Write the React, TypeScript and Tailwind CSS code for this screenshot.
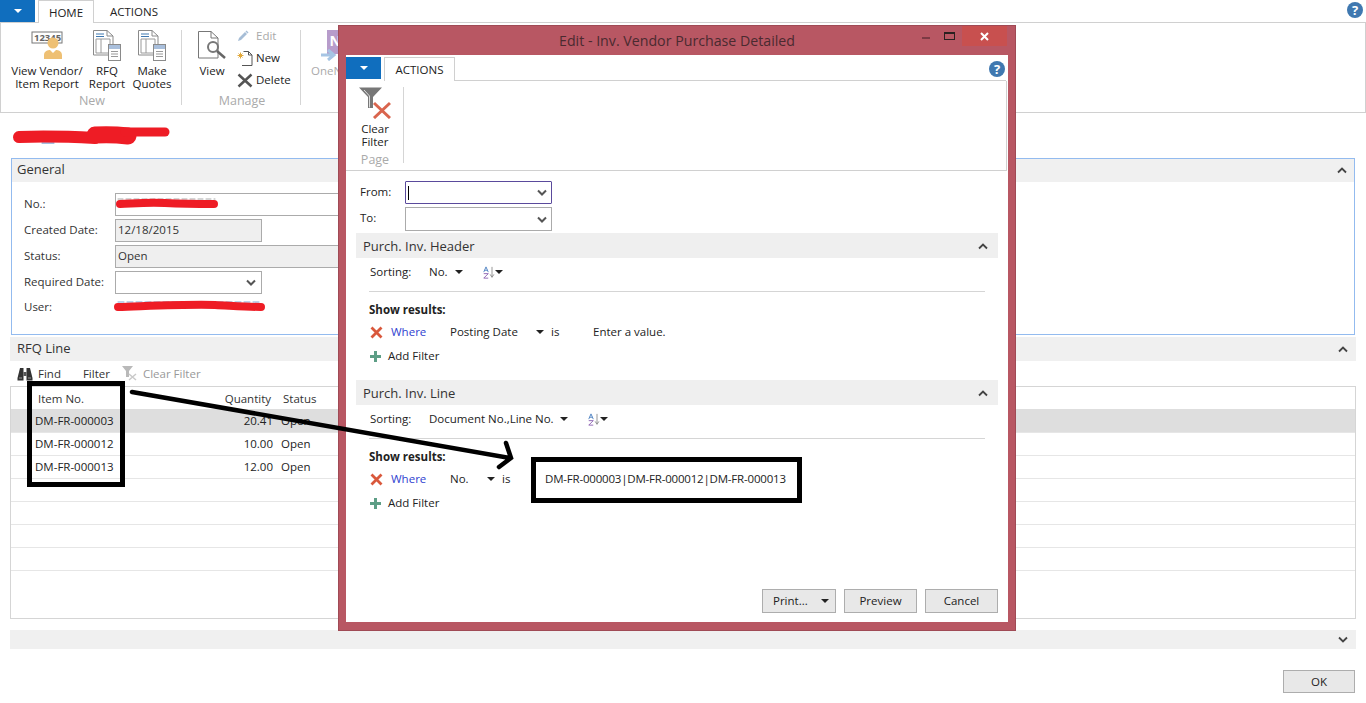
const Chevron = ({ down = false }: { down?: boolean }) => (
    <svg width="10" height="7" viewBox="0 0 10 7" className="shrink-0">
        <path
            d={down ? "M1 1.5 5 5.5 9 1.5" : "M1 5.5 5 1.5 9 5.5"}
            fill="none"
            stroke="#444"
            strokeWidth="1.8"
        />
    </svg>
);

const SelectArrow = () => (
    <svg width="10" height="7" viewBox="0 0 10 7" className="shrink-0">
        <path d="M1 1.5 5 5.5 9 1.5" fill="none" stroke="#555" strokeWidth="2" />
    </svg>
);

const Caret = () => (
    <span className="inline-block h-0 w-0 border-x-[4px] border-t-[4px] border-x-transparent border-t-[#222]" />
);

const MenuButton = () => (
    <div className="flex h-[22px] w-[35px] items-center justify-center bg-[#106ebe]">
        <span className="h-0 w-0 border-x-[4px] border-t-[4px] border-x-transparent border-t-white" />
    </div>
);

const HelpIcon = () => (
    <div className="flex h-4 w-4 items-center justify-center rounded-full bg-[#3f78b0] text-[13px] font-bold leading-none text-white">
        ?
    </div>
);

const ReportIcon = () => (
    <svg width="28" height="31" viewBox="0 0 28 31">
        <path d="M.5.5H14L20 6V25H.5Z" fill="#fff" stroke="#8a8a8a" />
        <path d="M14 .5V6H20" fill="none" stroke="#8a8a8a" />
        <path d="M3 4H11M3 6.500H11" stroke="#3f78b0" />
        <path d="M3 9H17V23H3ZM8 9V23" fill="none" stroke="#9a9a9a" />
        <rect x="15.500" y="14.500" width="12" height="16" fill="#fff" stroke="#8a8a8a" />
        <rect x="16" y="15" width="11" height="4" fill="#a9bfdc" />
        <path d="M18 21.500H25M18 24H25M18 26.500H25" stroke="#9a9a9a" />
    </svg>
);

const VendorIcon = () => (
    <svg width="33" height="30" viewBox="0 0 33 30">
        <rect x="1" y="1" width="30" height="11" fill="#fff" stroke="#777" />
        <text x="3" y="10" fontSize="9.500" fontWeight="700" fill="#666" fontFamily="Open Sans">
            12345
        </text>
        <circle cx="22" cy="12" r="5.500" fill="#eec074" />
        <path d="M13 28V24C13 20 17 19 19 19L22 22 25 19C27 19 31 20 31 24V28Z" fill="#eec074" />
    </svg>
);

const ViewIcon = () => (
    <svg width="28" height="30" viewBox="0 0 28 30">
        <path d="M.5.5H13L20 7V27H.5Z" fill="#fff" stroke="#777" />
        <path d="M13 .5V7H20" fill="none" stroke="#777" />
        <circle cx="15" cy="16" r="5" fill="#fff" stroke="#777" strokeWidth="2" />
        <path d="M19 20 27 27" stroke="#666" strokeWidth="2.500" />
    </svg>
);

const EditIcon = () => (
    <svg width="12" height="12" viewBox="0 0 12 12">
        <path d="M1 11 2 8 8 2 10 4 4 10Z" fill="#a6bdd6" />
        <path d="M9 1 11 3" stroke="#a6bdd6" strokeWidth="1.500" />
    </svg>
);

const NewIcon = () => (
    <svg width="16" height="15" viewBox="0 0 16 15">
        <path d="M6.500.5H11.500L15 4V14.500H5" fill="#fff" stroke="#555" />
        <path d="M11.500.5V4H15" fill="none" stroke="#555" />
        <path d="M3.500 1.500V7.500M.5 4.500H6.500M1.500 2.500 5.500 6.500M5.500 2.500 1.500 6.500" stroke="#e2a93b" />
    </svg>
);

const DeleteIcon = () => (
    <svg width="16" height="15" viewBox="0 0 16 15">
        <path d="M1.500 1.500 14.500 13.500M14.500 1.500 1.500 13.500" stroke="#555" strokeWidth="2.500" />
    </svg>
);

const OneNoteIcon = () => (
    <svg width="30" height="31" viewBox="0 0 30 31">
        <path d="M7 0H30V24H7Z" fill="#b79ccb" />
        <text x="9.500" y="16" fontSize="14" fontWeight="700" fill="#fff" fontFamily="Open Sans">
            N
        </text>
        <path d="M1 25H13M8 20 14 25 8 30" fill="none" stroke="#a6c5e4" strokeWidth="3" />
    </svg>
);

const BinocularsIcon = () => (
    <svg width="16" height="14" viewBox="0 0 16 14">
        <path d="M3 1H6.500V13.500H.5V11ZM9.500 1H13L15.500 11V13.500H9.500Z" fill="#333" />
        <path d="M6.500 5H9.500V9H6.500Z" fill="#555" />
        <path d="M2 11H5M11 11H14" stroke="#999" />
    </svg>
);

const ClearFilterSmall = () => (
    <svg width="16" height="15" viewBox="0 0 16 15">
        <path d="M0 0H11L7 5V11H4V5Z" fill="#b9b9b9" />
        <path d="M7 8 14 14M14 8 7 14" stroke="#c9c9c9" strokeWidth="1.500" />
    </svg>
);

const ClearFilterLarge = () => (
    <svg width="32" height="32" viewBox="0 0 32 32" className="shrink-0">
        <path d="M0 .5H23L14 10V21H9V10Z" fill="#777" />
        <path d="M5 3 10.500 9V20.500" fill="none" stroke="#ddd" />
        <path d="M15 16 31 31M31 16 15 31" stroke="#d9654e" strokeWidth="3" />
    </svg>
);

const RemoveIcon = () => (
    <svg width="13" height="13" viewBox="0 0 13 13">
        <path d="M1.500 1.500 11.500 11.500M11.500 1.500 1.500 11.500" stroke="#d9583c" strokeWidth="2.800" />
    </svg>
);

const AddIcon = () => (
    <svg width="11" height="11" viewBox="0 0 11 11">
        <path d="M5.500 0V11M0 5.500H11" stroke="#5d9e86" strokeWidth="3" />
    </svg>
);

const SortIcon = () => (
    <div className="flex w-[20px] items-center">
        <svg width="16" height="17" viewBox="0 0 16 17">
            <path d="M1 8 4 1 7 8M2 5.500H6" fill="none" stroke="#4a7fc0" strokeWidth="1.200" />
            <path d="M1 10H7L1 16H7" fill="none" stroke="#8a5fb0" strokeWidth="1.200" />
            <path d="M12 1V14M9.500 11 12 15 14.500 11" fill="none" stroke="#777" />
        </svg>
        <Caret />
    </div>
);

const RibbonButton = ({
    icon,
    lines,
    className,
}: {
    icon: React.ReactNode;
    lines: string[];
    className: string;
}) => (
    <div className={`flex flex-col items-center ${className}`}>
        <div className="flex h-[31px] items-end">{icon}</div>
        <div className="mt-[3px] text-center leading-[13px]">
            {lines.map((line) => (
                <div key={line}>{line}</div>
            ))}
        </div>
    </div>
);

const SmallAction = ({
    icon,
    label,
    muted = false,
}: {
    icon: React.ReactNode;
    label: string;
    muted?: boolean;
}) => (
    <div className="flex h-[22px] items-center">
        <div className="flex w-[19px] justify-start">{icon}</div>
        <span className={muted ? "text-[#aaa]" : "text-[#222]"}>{label}</span>
    </div>
);

const RibbonGroup = ({
    label,
    className,
    children,
}: {
    label: string;
    className: string;
    children: React.ReactNode;
}) => (
    <div className={`mt-[7px] flex h-[75px] flex-col border-r border-[#d5d5d5] text-[#222] ${className}`}>
        <div className="flex flex-1">{children}</div>
        <div className="-mb-[4px] h-[16px] pl-[2px] text-center text-[12.500px] leading-[16px] text-[#aaa]">{label}</div>
    </div>
);

const Field = ({
    label,
    className,
    children,
}: {
    label: string;
    className: string;
    children?: React.ReactNode;
}) => (
    <div className="flex h-[26px] items-center">
        <div className="w-[91px] text-[#333]">{label}</div>
        <div className={`flex h-[23px] items-center border border-[#ababab] px-[2px] text-[#333] ${className}`}>
            {children}
        </div>
    </div>
);

const FilterSection = ({
    title,
    sorting,
    sortWidth,
    field,
    fieldWidth,
    value,
    valueClass = "",
}: {
    title: string;
    sorting: string;
    sortWidth: string;
    field: string;
    fieldWidth: string;
    value: string;
    valueClass?: string;
}) => (
    <div>
        <div className="flex h-[25px] items-center justify-between bg-[#efefef] pl-[7px] pr-[10px] pt-[2px] text-[13px] text-[#333]">
            <span>{title}</span>
            <Chevron />
        </div>
        <div className="mx-[13px] flex h-[34px] items-center border-b border-[#d5d5d5] pb-[8px] pt-[3px] text-[#222]">
            <span className="ml-[1px] w-[59px]">Sorting:</span>
            <div className={`flex items-center justify-between ${sortWidth}`}>
                <span>{sorting}</span>
                <Caret />
            </div>
            <div className="ml-[20px]">
                <SortIcon />
            </div>
        </div>
        <div className="mx-[13px] mt-[9px] h-[18px] font-bold leading-[18px] text-[#222]">Show results:</div>
        <div className="mx-[14px] mt-[1px] flex h-[24px] items-center text-[#222]">
            <RemoveIcon />
            <span className="ml-[8px] w-[59px] text-[#2f3fd0]">Where</span>
            <div className={`flex items-center justify-between ${fieldWidth}`}>
                <span>{field}</span>
                <Caret />
            </div>
            <span className="ml-[7px] w-[42px]">is</span>
            <span className={valueClass}>{value}</span>
        </div>
        <div className="mx-[14px] flex h-[24px] items-center text-[#222]">
            <AddIcon />
            <span className="ml-[7px]">Add Filter</span>
        </div>
    </div>
);

const DialogButton = ({ className, children }: { className: string; children: React.ReactNode }) => (
    <div className={`flex h-[24px] items-center border border-[#adadad] bg-[#e8e8e8] text-[#222] ${className}`}>
        {children}
    </div>
);

export default function App() {
    return (
        <div className="relative h-[703px] w-[1366px] overflow-hidden bg-white font-['Open_Sans',sans-serif] text-[11.5px]">

            {/* Tabs */}

            <div className="flex h-[23px] items-start border-b border-[#d0d0d0]">
                <MenuButton />
                <div className="ml-[3px] flex h-[23px] w-[56px] items-center justify-center border-x border-t border-[#d0d0d0] bg-white pt-[1px] text-[#222]">
                    HOME
                </div>
                <div className="ml-[16px] flex h-[23px] items-center pt-[1px] text-[#222]">ACTIONS</div>
                <div className="ml-auto mr-[3px] mt-[2px]">
                    <HelpIcon />
                </div>
            </div>

            {/* Ribbon */}

            <div className="flex h-[90px] border-x border-b border-[#d0d0d0]">
                <RibbonGroup label="New" className="w-[181px]">
                    <RibbonButton icon={<VendorIcon />} lines={["View Vendor/", "Item Report"]} className="ml-[9px] w-[74px]" />
                    <RibbonButton icon={<ReportIcon />} lines={["RFQ", "Report"]} className="ml-[1px] w-[44px]" />
                    <RibbonButton icon={<ReportIcon />} lines={["Make", "Quotes"]} className="ml-[1px] w-[44px]" />
                </RibbonGroup>
                <RibbonGroup label="Manage" className="w-[119px]">
                    <RibbonButton icon={<ViewIcon />} lines={["View"]} className="ml-[12px] w-[36px]" />
                    <div className="-mt-[5px] ml-[7px] flex flex-col">
                        <SmallAction icon={<EditIcon />} label="Edit" muted />
                        <SmallAction icon={<NewIcon />} label="New" />
                        <SmallAction icon={<DeleteIcon />} label="Delete" />
                    </div>
                </RibbonGroup>
                <RibbonButton icon={<OneNoteIcon />} lines={["OneNote"]} className="ml-[10px] mt-[7px] text-[#aaa]" />
            </div>

            {/* Page title */}

            <div className="h-[45px]" />

            {/* General */}

            <div className="mx-[11px] h-[177px] border border-[#93bbef]">
                <div className="flex h-[23px] items-center justify-between bg-[#f0f0f0] pb-[1px] pl-[5px] pr-[7px] text-[13px] text-[#333]">
                    <span>General</span>
                    <Chevron />
                </div>
                <div className="pl-[12px] pt-[9px]">
                    <Field label="No.:" className="w-[300px]" />
                    <Field label="Created Date:" className="w-[147px] bg-[#efefef]">12/18/2015</Field>
                    <Field label="Status:" className="w-[300px] bg-[#efefef]">Open</Field>
                    <Field label="Required Date:" className="w-[147px] justify-end pr-[5px]">
                        <SelectArrow />
                    </Field>
                    <div className="flex h-[26px] items-center pb-[2px] text-[#333]">User:</div>
                </div>
            </div>

            {/* RFQ Line */}

            <div className="mx-[10px] mt-[2px] flex h-[24px] items-center justify-between bg-[#f0f0f0] pl-[7px] pr-[8px] text-[13px] text-[#333]">
                <span>RFQ Line</span>
                <Chevron />
            </div>

            <div className="ml-[17px] flex h-[25px] items-center text-[#333]">
                <BinocularsIcon />
                <span className="ml-[5px]">Find</span>
                <span className="ml-[22px]">Filter</span>
                <span className="ml-[12px]">
                    <ClearFilterSmall />
                </span>
                <span className="ml-[5px] text-[#999]">Clear Filter</span>
            </div>

            <div className="mx-[10px] h-[233px] border border-[#d5d5d5] text-[#222]">
                <div className="flex h-[22px] items-center pt-[1px] text-[#333]">
                    <div className="ml-[27px] w-[160px]">Item No.</div>
                    <div className="w-[73px] text-right">Quantity</div>
                    <div className="ml-[12px]">Status</div>
                </div>
                <div className="flex h-[24px] items-center border-b border-[#e6e6e6] bg-[#dedede]">
                    <div className="ml-[24px] w-[163px]">DM-FR-000003</div>
                    <div className="w-[75px] text-right">20.41</div>
                    <div className="ml-[8px]">Open</div>
                </div>
                <div className="flex h-[23px] items-center border-b border-[#e6e6e6]">
                    <div className="ml-[24px] w-[163px]">DM-FR-000012</div>
                    <div className="w-[75px] text-right">10.00</div>
                    <div className="ml-[8px]">Open</div>
                </div>
                <div className="flex h-[23px] items-center border-b border-[#e6e6e6]">
                    <div className="ml-[24px] w-[163px]">DM-FR-000013</div>
                    <div className="w-[75px] text-right">12.00</div>
                    <div className="ml-[8px]">Open</div>
                </div>
                <div className="h-[23px] border-b border-[#e6e6e6]" />
                <div className="h-[23px] border-b border-[#e6e6e6]" />
                <div className="h-[23px] border-b border-[#e6e6e6]" />
                <div className="h-[23px] border-b border-[#e6e6e6]" />
            </div>

            <div className="mx-[10px] mt-[11px] flex h-[19px] items-center justify-end bg-[#f0f0f0] pr-[8px]">
                <Chevron down />
            </div>

            <div className="mr-[11px] mt-[21px] flex justify-end">
                <div className="flex h-[23px] w-[72px] items-center justify-center border border-[#adadad] bg-[#e8e8e8] text-[#222]">
                    OK
                </div>
            </div>

            {/* Dialog */}

            <div className="absolute left-[338px] top-[25px] flex h-[606px] w-[678px] flex-col border border-[#a04a55] bg-[#b85763] px-[7px] pb-[8px]">
                <div className="relative flex h-[29px] shrink-0 items-center justify-center text-[14.200px] text-[#4a2a30]">
                    <span>Edit - Inv. Vendor Purchase Detailed</span>
                    <div className="absolute right-[1px] top-0 flex h-[20px] items-center">
                        <span className="mr-[14px] mt-[3px] h-[2px] w-[8px] bg-[#7c3a44]" />
                        <span className="mr-[7px] h-[8px] w-[11px] border border-t-2 border-[#2a2020]" />
                        <div className="flex h-[20px] w-[45px] items-center justify-center bg-[#c8504f]">
                            <svg width="9" height="9" viewBox="0 0 9 9">
                                <path d="M1 1 8 8M8 1 1 8" stroke="#fff" strokeWidth="2" />
                            </svg>
                        </div>
                    </div>
                </div>

                <div className="flex min-h-0 flex-1 flex-col bg-white">

                    {/* Dialog tabs */}

                    <div className="flex h-[26px] shrink-0 items-start pt-[2px]">
                        <MenuButton />
                        <div className="ml-[3px] flex h-[24px] w-[71px] items-center justify-center border-x border-t border-[#d0d0d0] bg-white text-[#222]">
                            ACTIONS
                        </div>
                        <div className="mr-[2px] h-full flex-1 border-b border-[#d0d0d0]" />
                        <div className="absolute right-[10px] top-[35px]">
                            <HelpIcon />
                        </div>
                    </div>

                    {/* Dialog ribbon */}

                    <div className="mr-[1px] flex h-[90px] shrink-0 border-b border-r border-[#d0d0d0] pt-[6px]">
                        <div className="flex h-[76px] w-[58px] flex-col items-center border-r border-[#d5d5d5] pl-[1px]">
                            <ClearFilterLarge />
                            <div className="mt-[3px] text-center leading-[13px] text-[#222]">
                                <div>Clear</div>
                                <div>Filter</div>
                            </div>
                            <div className="mt-[4px] h-[16px] text-[12.500px] leading-[16px] text-[#aaa]">Page</div>
                        </div>
                    </div>

                    {/* Date range */}

                    <div className="ml-[14px] mt-[10px] flex h-[23px] shrink-0 items-center text-[#222]">
                        <span className="w-[45px] pb-[2px]">From:</span>
                        <div className="flex h-[23px] w-[147px] items-center justify-between rounded-[1px] border border-[#5a4a9c] pl-[2px] pr-[4px]">
                            <span className="h-[14px] w-px bg-black" />
                            <SelectArrow />
                        </div>
                    </div>
                    <div className="ml-[14px] mt-[3px] flex h-[24px] shrink-0 items-center text-[#222]">
                        <span className="w-[45px] pb-[2px]">To:</span>
                        <div className="flex h-[24px] w-[147px] items-center justify-end border border-[#ababab] pr-[4px]">
                            <SelectArrow />
                        </div>
                    </div>

                    <div className="mx-[10px] mt-[2px] flex flex-col gap-[12px]">
                        <FilterSection
                            title="Purch. Inv. Header"
                            sorting="No."
                            sortWidth="w-[34px]"
                            field="Posting Date"
                            fieldWidth="w-[94px]"
                            value="Enter a value."
                        />
                        <FilterSection
                            title="Purch. Inv. Line"
                            sorting="Document No.,Line No."
                            sortWidth="w-[139px]"
                            field="No."
                            fieldWidth="w-[45px]"
                            value="DM-FR-000003|DM-FR-000012|DM-FR-000013"
                            valueClass="ml-[1px] tracking-[-0.2px]"
                        />
                    </div>

                    {/* Dialog buttons */}

                    <div className="mb-[9px] mr-[10px] mt-auto flex justify-end gap-[8px]">
                        <DialogButton className="w-[74px] justify-between pl-[10px] pr-[6px]">
                            <span>Print...</span>
                            <Caret />
                        </DialogButton>
                        <DialogButton className="w-[73px] justify-center">Preview</DialogButton>
                        <DialogButton className="w-[73px] justify-center">Cancel</DialogButton>
                    </div>
                </div>
            </div>

            {/* Hand drawn marks over the screenshot */}

            <svg className="absolute left-0 top-0 h-[703px] w-[338px]" fill="none" strokeLinecap="round">
                <path d="M118 199H215" stroke="#aaa" strokeDasharray="5 3" />
                <path d="M118 302H262" stroke="#7fa6d8" strokeDasharray="6 3" />
                <path d="M42 143H54" stroke="#4a7fc0" />
                <path d="M19 137C50 136 75 137 95 138" stroke="#ee1c25" strokeWidth="12" />
                <path d="M95 135C110 134 120 135 128 136" stroke="#ee1c25" strokeWidth="17" />
                <path d="M125 132C140 132 155 132 165 132" stroke="#ee1c25" strokeWidth="9" />
                <path d="M120 204C140 203 150 202 165 203 185 204 200 204 214 204" stroke="#ee1c25" strokeWidth="8" />
                <path d="M118 307C150 306 190 304 215 305 235 306 250 307 261 307" stroke="#ee1c25" strokeWidth="8" />
            </svg>
            <div className="absolute left-[27px] top-[381px] h-[106px] w-[98px] border-[5px] border-black" />
            <div className="absolute left-[531px] top-[457px] h-[46px] w-[271px] border-[5px] border-black" />
            <svg className="absolute left-0 top-0 h-[703px] w-[1366px]" fill="none" stroke="#000" strokeLinecap="round">
                <path d="M132 392 510 458M506 443 511 458 499 467" strokeWidth="4.500" />
            </svg>
        </div>
    );
}
